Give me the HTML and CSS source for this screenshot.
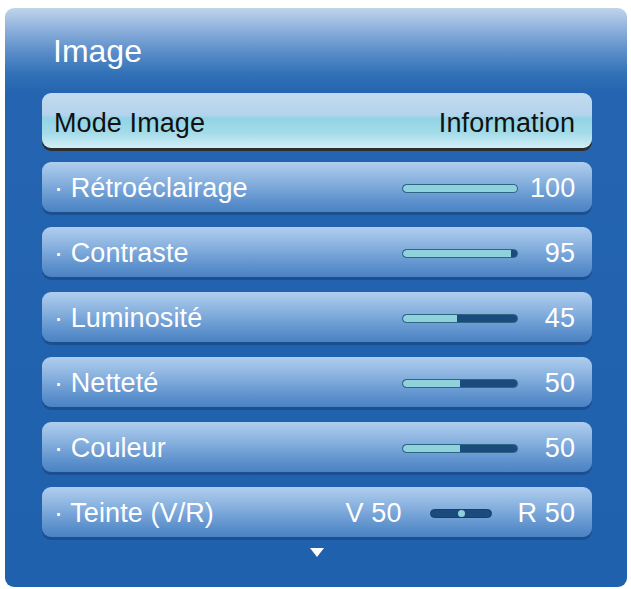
FILE: index.html
```html
<!DOCTYPE html>
<html lang="fr">
<head>
  <meta charset="UTF-8" />
  <title>Image</title>
  <link rel="stylesheet" href="styles.css">
</head>
<body>

<div class="panel">
  <h1 class="panel-title">Image</h1>

  <ul class="menu">
    <li class="row selected">
      <span class="label">Mode Image</span>
      <span class="value">Information</span>
    </li>
    <li class="row">
      <span class="label">· Rétroéclairage</span>
      <span class="slider"><span class="fill" style="width: 100%"></span></span>
      <span class="value num">100</span>
    </li>
    <li class="row">
      <span class="label">· Contraste</span>
      <span class="slider"><span class="fill" style="width: 95%"></span></span>
      <span class="value num">95</span>
    </li>
    <li class="row">
      <span class="label">· Luminosité</span>
      <span class="slider"><span class="fill" style="width: 47%"></span></span>
      <span class="value num">45</span>
    </li>
    <li class="row">
      <span class="label">· Netteté</span>
      <span class="slider"><span class="fill" style="width: 50%"></span></span>
      <span class="value num">50</span>
    </li>
    <li class="row">
      <span class="label">· Couleur</span>
      <span class="slider"><span class="fill" style="width: 50%"></span></span>
      <span class="value num">50</span>
    </li>
    <li class="row">
      <span class="label">· Teinte (V/R)</span>
      <span class="tint-left">V 50</span>
      <span class="tint-track"><span class="tint-dot"></span></span>
      <span class="tint-right">R 50</span>
    </li>
  </ul>

  <div class="more-arrow"></div>
</div>

</body>
</html>
```

FILE: styles.css
```css
* {
  margin: 0;
  padding: 0;
  box-sizing: border-box;
}

body {
  background: #fff;
  font-family: 'Liberation Sans', Arial, sans-serif;
}

.panel {
  width: 622px;
  height: 579px;
  margin: 8px 0 0 5px;
  padding: 0 35px 0 37px;
  border-radius: 9px;
  background: linear-gradient(to bottom, #c0d4ea 0px, #95b6de 18px, #5e90cb 42px, #3372b8 65px, #2464b0 85px, #1f61ad 100%);
}

.panel-title {
  height: 85px;
  padding: 27px 0 0 11px;
  font-size: 32px;
  font-weight: normal;
  line-height: 32px;
  color: #fff;
}

.menu {
  list-style: none;
}

/* rows */
.row {
  display: flex;
  align-items: center;
  height: 50px;
  margin-bottom: 15px;
  padding: 3px 17px 0 12px;
  border-radius: 9px;
  background: linear-gradient(to bottom, #b0ceee 0%, #8cb4e0 35%, #6496d0 72%, #4a82c3 100%);
  box-shadow: 0 3px 0 #1c4f8f;
  color: #fff;
  font-size: 27px;
  letter-spacing: 0.1px;
}

.row:last-child {
  margin-bottom: 0;
}

.row.selected {
  height: 55px;
  margin-bottom: 14px;
  padding-top: 6px;
  background: linear-gradient(to bottom, #c2dbf0 0%, #b4d3ec 40%, #92d3e5 46%, #a3dbe9 72%, #d2eff6 100%);
  box-shadow: 0 3px 0 #2e2e2e;
  color: #111;
}

.label {
  flex: 1;
}

.value {
  text-align: right;
}

.value.num {
  width: 45px;
}

/* level bar */
.slider {
  width: 116px;
  height: 9px;
  margin-right: 12px;
  border: 1px solid #2b6683;
  border-radius: 5px;
  background: #1b4a7d;
  overflow: hidden;
}

.slider .fill {
  display: block;
  height: 100%;
  border-radius: 4px 0 0 4px;
  background: #8fd2dc;
}

/* tint row */
.tint-left {
  margin-right: 28px;
}

.tint-track {
  position: relative;
  width: 62px;
  height: 9px;
  margin-right: 26px;
  border: 1px solid #173f6b;
  border-radius: 5px;
  background: #1b4a7d;
}

.tint-dot {
  position: absolute;
  left: 27px;
  top: 0;
  width: 7px;
  height: 7px;
  border-radius: 50%;
  background: #8fd2dc;
}

.more-arrow {
  width: 0;
  height: 0;
  margin: 11px auto 0;
  border-left: 7.5px solid transparent;
  border-right: 7.5px solid transparent;
  border-top: 9px solid #fff;
}
```
